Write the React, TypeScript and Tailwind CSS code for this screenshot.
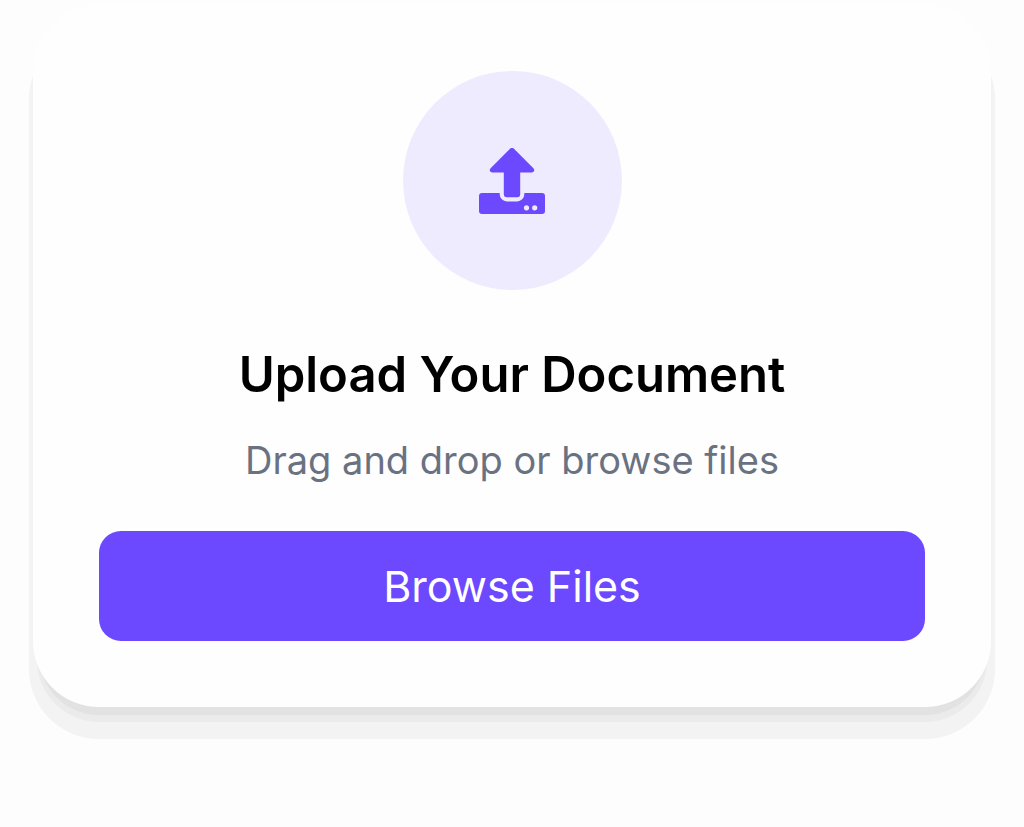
export default function App() {
  return (
    <main className="min-h-screen bg-[#fdfdfd] px-[33px] pt-[5px] pb-[120px] font-['Inter',sans-serif]">
      <section className="flex flex-col items-center rounded-[66px] bg-[#fefefe] p-[66px] shadow-[0_14px_0_-6px_#e2e2e2,0_19px_0_-4px_#ebebeb,0_28px_0_4px_#f3f3f3]">
        <div className="flex size-[219px] items-center justify-center rounded-full bg-[#efebff]">
          <svg
            viewBox="0 0 66 66"
            className="size-[66px] fill-[#6c48ff]"
            aria-hidden="true"
          >
            <path d="M31 .8a3 3 0 0 1 4 0l19.400 19.400c1.800 1.800.5 4.300-1.800 4.300H41.200v21.700a3 3 0 0 1-3 3H27.800a3 3 0 0 1-3-3V24.500H13.400c-2.300 0-3.600-2.500-1.800-4.300Z" />
            <path
              fillRule="evenodd"
              d="M3 45h17.700v1.200a7.200 7.200 0 0 0 7.200 7.200h10.200a7.200 7.200 0 0 0 7.200-7.200V45H63a3 3 0 0 1 3 3v15a3 3 0 0 1-3 3H3a3 3 0 0 1-3-3V48a3 3 0 0 1 3-3Zm44.500 12.200a2.600 2.600 0 1 0 0 5.200 2.600 2.600 0 0 0 0-5.200Zm8.200 0a2.600 2.600 0 1 0 0 5.200 2.600 2.600 0 0 0 0-5.200Z"
            />
          </svg>
        </div>
        <h1 className="mt-[53px] text-[49px] leading-16 font-semibold text-black">
          Upload Your Document
        </h1>
        <p className="mt-[29px] text-[38px] leading-12 text-gray-500">
          Drag and drop or browse files
        </p>
        <button
          type="button"
          className="mt-[47px] h-[110px] w-full rounded-[22px] bg-[#6c48ff] text-[43px] leading-14 text-white"
        >
          Browse Files
        </button>
      </section>
    </main>
  );
}
